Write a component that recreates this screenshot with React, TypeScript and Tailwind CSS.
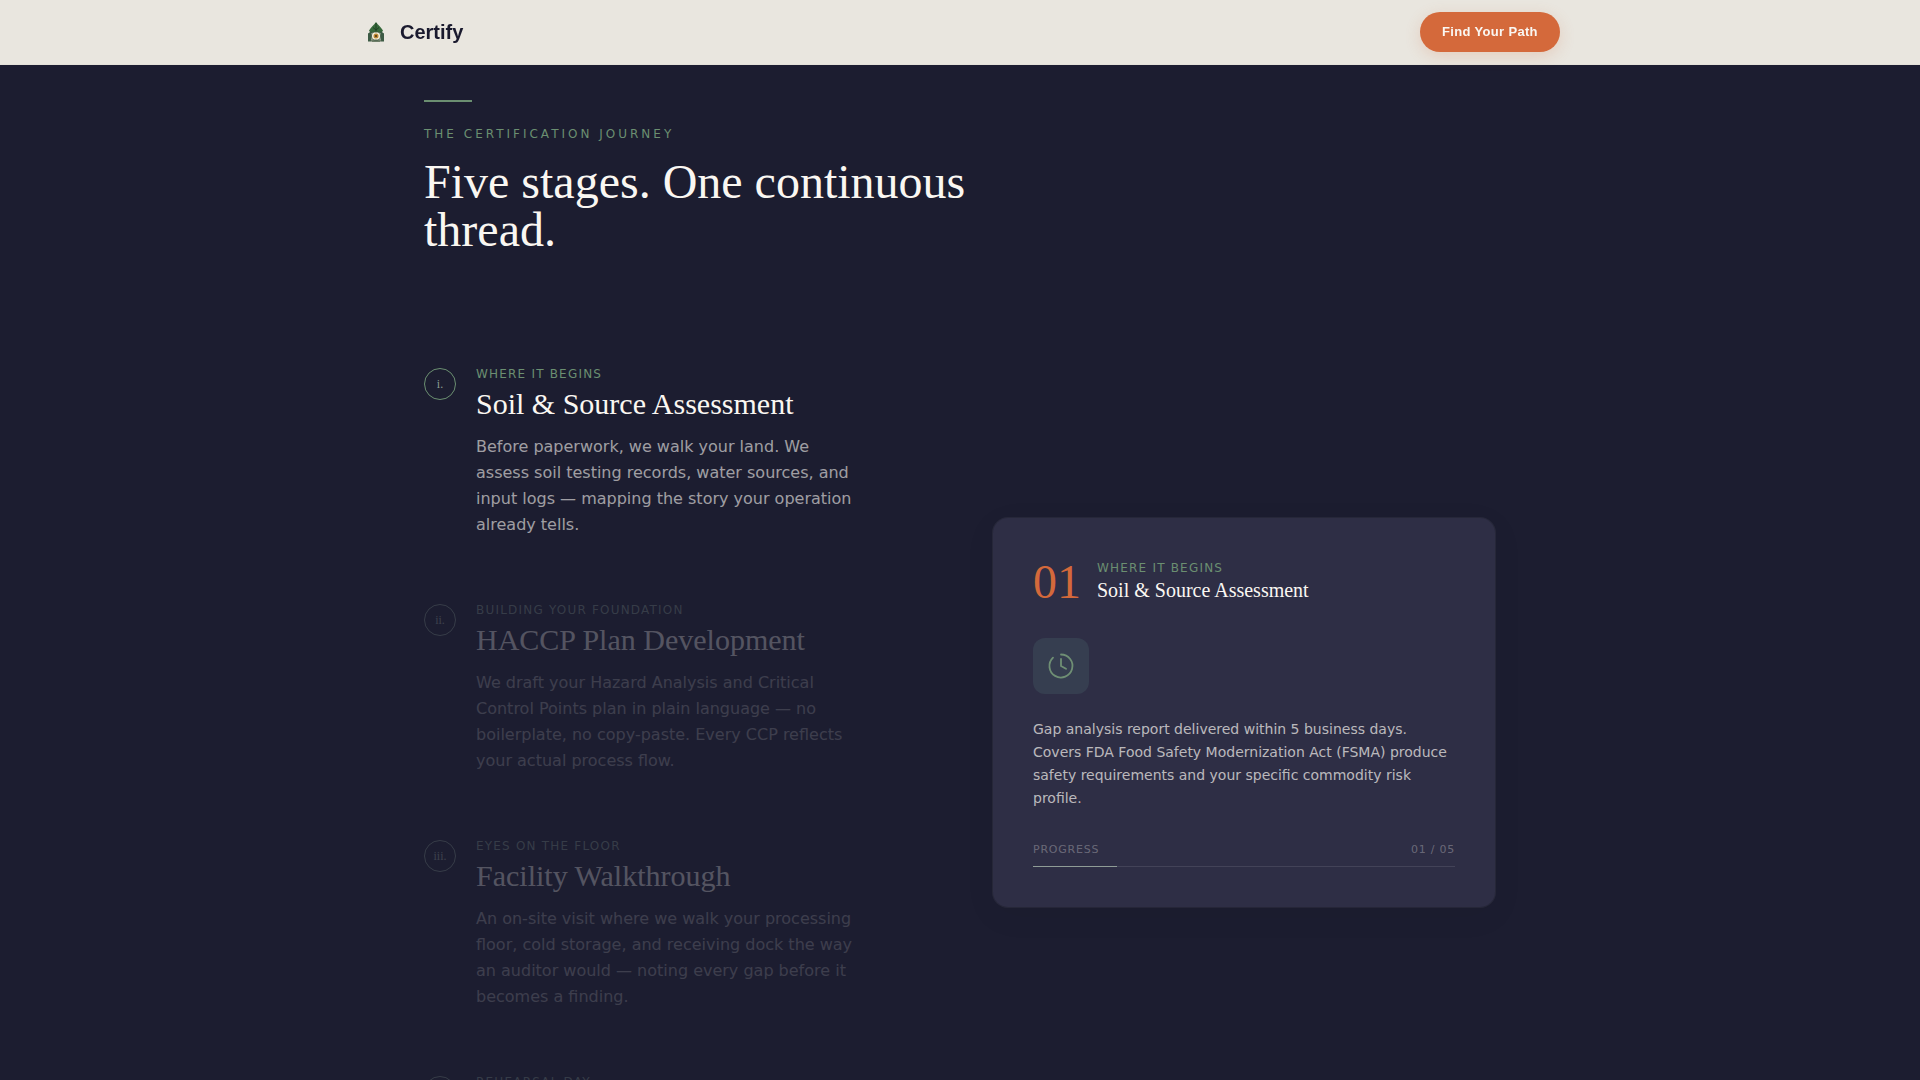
import { clsx } from "clsx";

type Stage = {
  numeral: string;
  label: string;
  title: string;
  body: string;
};

const STAGES: Stage[] = [
  {
    numeral: "i.",
    label: "Where it begins",
    title: "Soil & Source Assessment",
    body: "Before paperwork, we walk your land. We assess soil testing records, water sources, and input logs — mapping the story your operation already tells.",
  },
  {
    numeral: "ii.",
    label: "Building your foundation",
    title: "HACCP Plan Development",
    body: "We draft your Hazard Analysis and Critical Control Points plan in plain language — no boilerplate, no copy-paste. Every CCP reflects your actual process flow.",
  },
  {
    numeral: "iii.",
    label: "Eyes on the floor",
    title: "Facility Walkthrough",
    body: "An on-site visit where we walk your processing floor, cold storage, and receiving dock the way an auditor would — noting every gap before it becomes a finding.",
  },
  {
    numeral: "",
    label: "Rehearsal day",
    title: "",
    body: "",
  },
];

const TOTAL = 5;
const pad = (n: number) => String(n).padStart(2, "0");

function Logo() {
  return (
    <svg viewBox="0 0 32 32" className="size-8" aria-hidden="true">
      <path d="M16 6c2 3.200 5.500 5.600 7 8.600L21.500 17h-11L9 14.600C10.500 11.600 14 9.200 16 6z" fill="#36683a" />
      <path d="M16 7v8M13 11.500l3 2.500 3-2.500" stroke="#1e4023" strokeWidth="1" fill="none" />
      <path d="M8 17.500 11.500 15v10.500H8zM24 17.500 20.500 15v10.500H24z" fill="#3c5a44" />
      <path d="M10.500 24h11L20 26h-8z" fill="#6d7d68" />
      <rect x="11.500" y="16" width="9" height="8" rx="3" fill="#f3ecd6" stroke="#34513a" strokeWidth="0.800" />
      <circle cx="16" cy="20" r="2.500" fill="#bd8a35" />
      <circle cx="16" cy="20" r="1.100" fill="#4d3717" />
    </svg>
  );
}

function Header() {
  return (
    <header className="sticky top-0 z-10 border-b border-[#e4e1d9] bg-[#e9e6df]">
      <div className="mx-auto flex h-16 max-w-[1200px] items-center justify-between">
        <a href="#top" className="flex items-center gap-2 text-xl font-bold text-[#1a1a2e]">
          <Logo />
          <span>Certify</span>
        </a>
        <button
          type="button"
          className="h-10 w-[140px] rounded-full bg-[#d4693b] text-[13px] font-bold tracking-wide text-[#faf7f2] shadow-[0_4px_16px_rgba(212,105,59,0.2)]"
        >
          Find Your Path
        </button>
      </div>
    </header>
  );
}

function StageItem({ stage, active }: { stage: Stage; active: boolean }) {
  return (
    <li className={clsx("flex gap-5", !active && "opacity-30")}>
      <span
        className={clsx(
          "flex size-8 shrink-0 items-center justify-center rounded-full border font-['Liberation_Serif',serif] text-xs",
          active ? "border-[#6b8f71] text-[#8a9c90]" : "border-[#74857f] text-[#8a9490]",
        )}
      >
        {stage.numeral}
      </span>
      <div className="max-w-sm">
        <p className={clsx("text-xs leading-3 tracking-widest uppercase", active ? "text-[#6b8f71]" : "text-[#74857f]")}>
          {stage.label}
        </p>
        <h3
          className={clsx(
            "mt-1.5 font-['Liberation_Serif',serif] text-3xl",
            active ? "text-[#faf7f2]" : "text-[#faf7f2]/85",
          )}
        >
          {stage.title}
        </h3>
        <p className={clsx("mt-3 text-base leading-[26px]", active ? "text-[#faf7f2]/60" : "text-[#faf7f2]/50")}>
          {stage.body}
        </p>
      </div>
    </li>
  );
}

function StageCard({ stage, index }: { stage: Stage; index: number }) {
  return (
    <article className="rounded-2xl border border-white/5 bg-[#2e2e45] bg-clip-padding p-10 shadow-[0_8px_32px_rgba(0,0,0,0.05)]">
      <div className="flex items-center gap-4">
        <span className="font-['Liberation_Serif',serif] text-5xl leading-12 text-[#d4693b]">{pad(index + 1)}</span>
        <div>
          <p className="text-xs tracking-widest text-[#6b8f71] uppercase">{stage.label}</p>
          <h4 className="font-['Liberation_Serif',serif] text-xl text-[#faf7f2]">{stage.title}</h4>
        </div>
      </div>

      <div className="mt-8 flex size-14 items-center justify-center rounded-xl bg-[#363e50]">
        <svg viewBox="0 0 28 28" className="size-7" fill="none" stroke="#6f8f74" strokeWidth="1.800" strokeLinecap="round">
          <path d="M14 2.500A11.500 11.500 0 1 1 6 5.700" />
          <path d="M14 7v7l5 2.800" />
        </svg>
      </div>

      <p className="mt-6 text-sm leading-[23px] text-[#faf7f2]/70">
        Gap analysis report delivered within 5 business days. Covers FDA Food Safety Modernization Act (FSMA) produce
        safety requirements and your specific commodity risk profile.
      </p>

      <div className="mt-8">
        <div className="flex justify-between text-[11px] leading-4 tracking-[0.07em] text-[#faf7f2]/30">
          <span className="uppercase">Progress</span>
          <span>
            {pad(index + 1)} / {pad(TOTAL)}
          </span>
        </div>
        <div className="mt-2 h-px bg-white/10">
          <div className="h-px bg-[#8f9c96]" style={{ width: `${((index + 1) / TOTAL) * 100}%` }} />
        </div>
      </div>
    </article>
  );
}

export default function App() {
  const current = 0;

  return (
    <div id="top" className="h-screen overflow-hidden bg-[#1c1d30] font-['Liberation_Sans',sans-serif]">
      <Header />
      <main className="mx-auto max-w-[1200px] px-16 pt-[35px] font-['DejaVu_Sans',sans-serif]">
        <div className="h-0.5 w-12 bg-[#6b8f71]" />
        <p className="mt-6 text-xs tracking-[3px] text-[#6b8f71] uppercase">The Certification Journey</p>
        <h2 className="mt-4 max-w-xl font-['Liberation_Serif',serif] text-5xl leading-12 text-[#faf7f2]">
          Five stages. One continuous thread.
        </h2>

        <div className="mt-[114px] grid grid-cols-2 items-start gap-16">
          <ol className="space-y-[66px]">
            {STAGES.map((stage, i) => (
              <StageItem key={stage.label} stage={stage} active={i === current} />
            ))}
          </ol>
          <div className="pt-[149px]">
            <StageCard stage={STAGES[current]} index={current} />
          </div>
        </div>
      </main>
    </div>
  );
}
